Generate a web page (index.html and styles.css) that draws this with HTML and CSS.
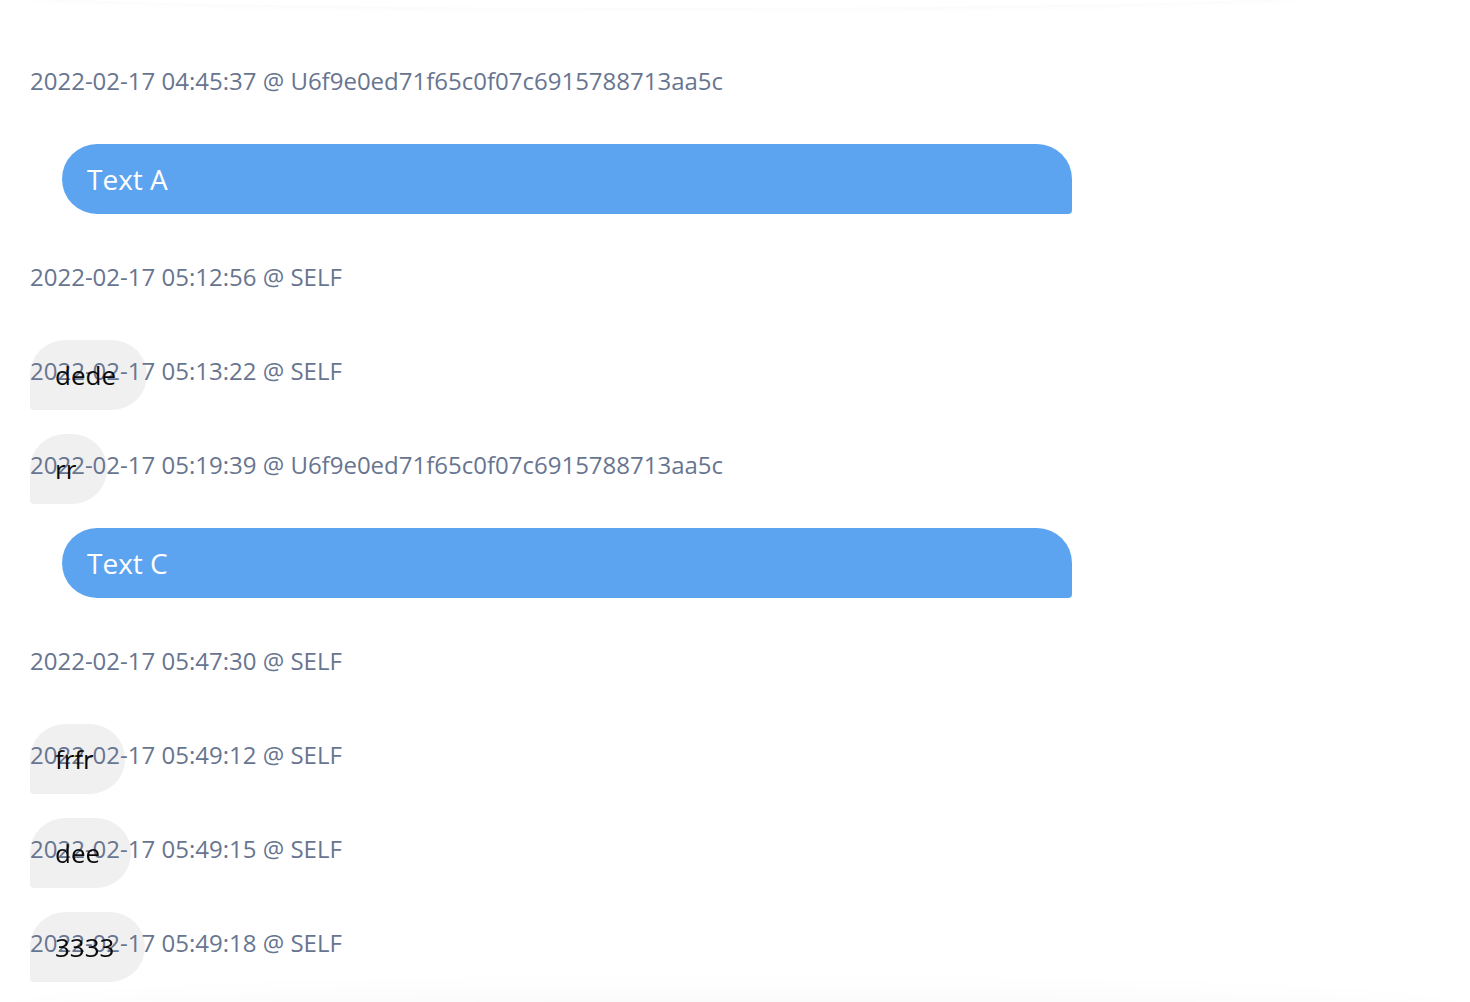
FILE: index.html
```html
<!DOCTYPE html>
<html>
<head>
<meta charset="utf-8">
<link rel="stylesheet" href="styles.css">
</head>
<body>
<div class="topbar"></div>
<div class="chat">
  <div class="msg">
    <div class="stamp">2022-02-17 04:45:37 @ U6f9e0ed71f65c0f07c6915788713aa5c</div>
    <div class="row other"><div class="bubble blue">Text A</div></div>
  </div>
  <div class="msg">
    <div class="stamp">2022-02-17 05:12:56 @ SELF</div>
    <div class="row self"><div class="bubble gray"><span class="txt">dede</span></div></div>
  </div>
  <div class="msg">
    <div class="stamp">2022-02-17 05:13:22 @ SELF</div>
    <div class="row self"><div class="bubble gray"><span class="txt">rr</span></div></div>
  </div>
  <div class="msg">
    <div class="stamp">2022-02-17 05:19:39 @ U6f9e0ed71f65c0f07c6915788713aa5c</div>
    <div class="row other"><div class="bubble blue">Text C</div></div>
  </div>
  <div class="msg">
    <div class="stamp">2022-02-17 05:47:30 @ SELF</div>
    <div class="row self"><div class="bubble gray"><span class="txt">frfr</span></div></div>
  </div>
  <div class="msg">
    <div class="stamp">2022-02-17 05:49:12 @ SELF</div>
    <div class="row self"><div class="bubble gray"><span class="txt">dee</span></div></div>
  </div>
  <div class="msg">
    <div class="stamp">2022-02-17 05:49:15 @ SELF</div>
    <div class="row self"><div class="bubble gray"><span class="txt">3333</span></div></div>
  </div>
  <div class="msg">
    <div class="stamp">2022-02-17 05:49:18 @ SELF</div>
    <div class="row self"></div>
  </div>
</div>
<div class="bottombar"></div>
</body>
</html>
```

FILE: styles.css
```css
html, body {
  margin: 0;
  padding: 0;
  background: #ffffff;
  height: 1002px;
  overflow: hidden;
}
body {
  font-family: "Open Sans", "Noto Sans", sans-serif;
}
.topbar {
  position: fixed;
  top: -20px;
  left: 20px;
  width: 1290px;
  height: 28px;
  border-radius: 50%;
  box-shadow: 0 2px 6px rgba(0, 0, 0, 0.025);
  background: #ffffff;
}
.bottombar {
  position: fixed;
  bottom: -60px;
  left: 0;
  right: 0;
  height: 60px;
  border-radius: 50% 50% 0 0;
  box-shadow: 0 0 40px rgba(0, 0, 0, 0.045);
  background: #fafafa;
}
.chat {
  padding: 63px 30px 0 30px;
}
.msg {
  display: flex;
  flex-direction: column;
}
.stamp {
  font-size: 24px;
  line-height: 36px;
  color: #687590;
  margin-bottom: 45px;
}
.row.other {
  margin-bottom: 45px;
  padding-left: 32px;
}
.row.self {
  height: 0;
  margin-bottom: 13px;
}
.bubble {
  box-sizing: border-box;
  height: 70px;
  line-height: 40px;
  padding: 15px 27px;
}
.blue {
  width: 1010px;
  background: #5ca4ef;
  color: #ffffff;
  font-size: 28px;
  padding-left: 25px;
  border-radius: 35px 35px 4px 35px;
}
.gray {
  display: inline-block;
  background: #f0f0f0;
  color: #0a0a0a;
  font-size: 26px;
  padding-left: 25px;
  padding-right: 31px;
  border-radius: 35px 35px 35px 4px;
}
.txt {
  position: relative;
  z-index: 1;
}
```
